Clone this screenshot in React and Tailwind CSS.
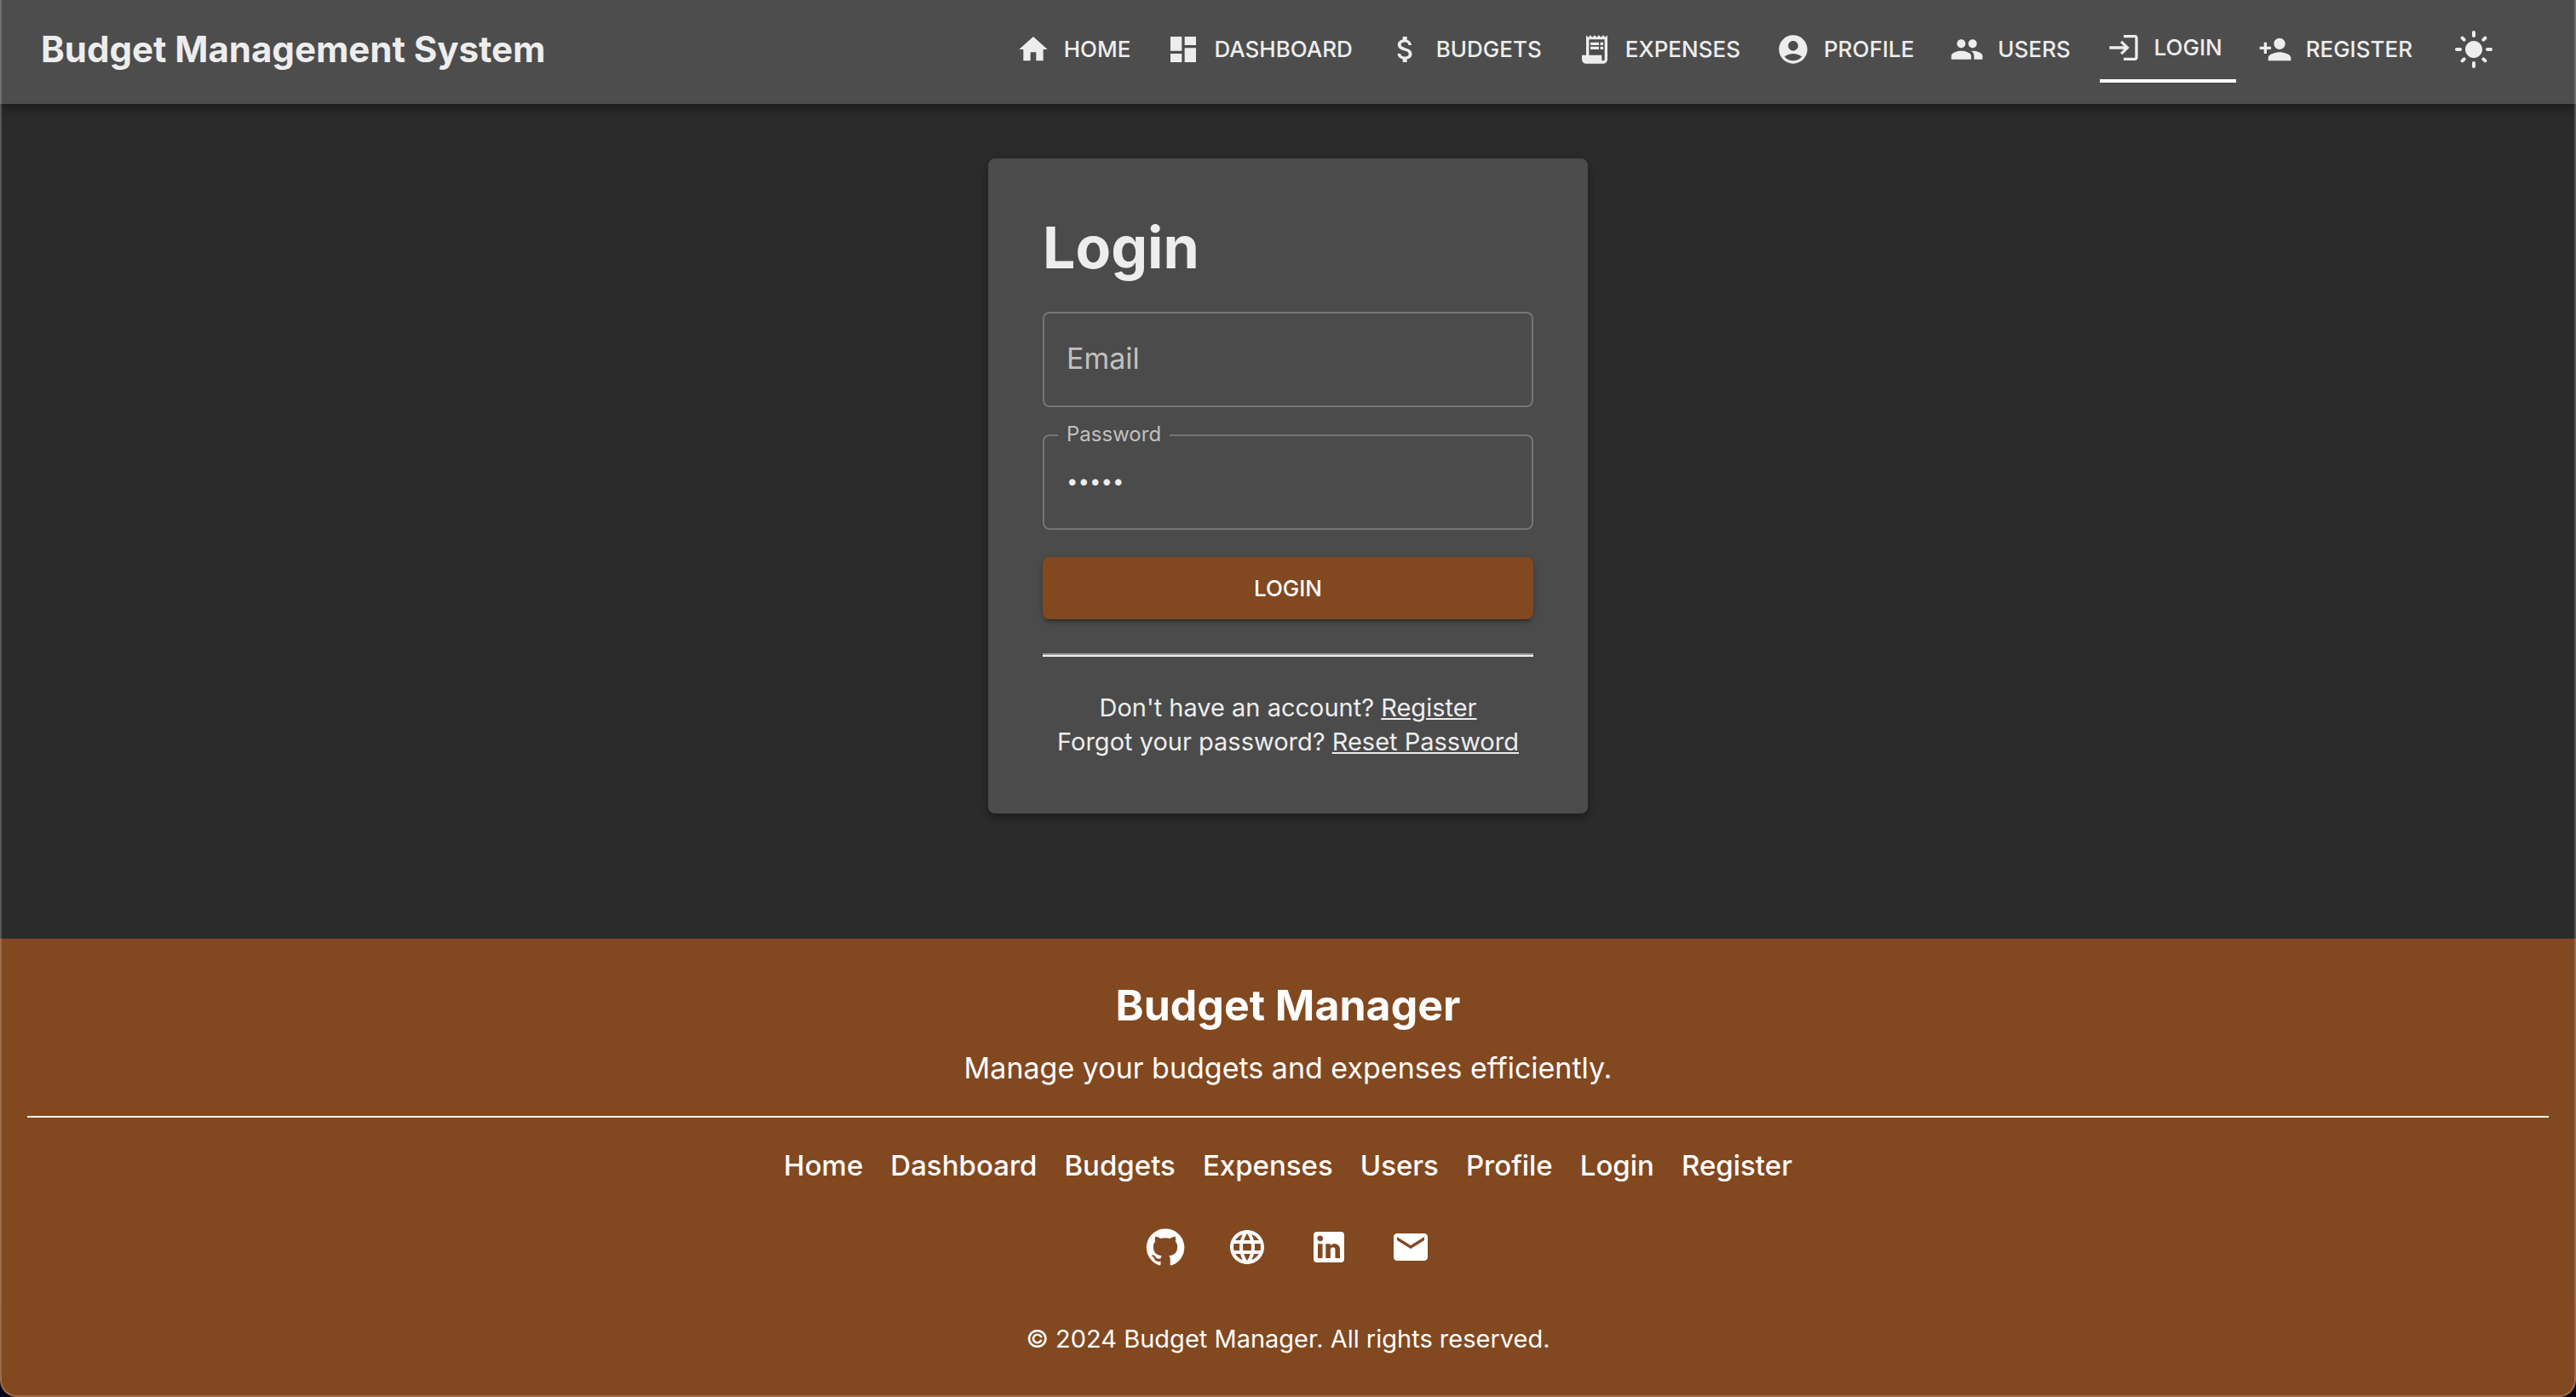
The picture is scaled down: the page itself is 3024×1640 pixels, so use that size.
import { useState } from "react";
import {
  MdAccountCircle,
  MdAttachMoney,
  MdDashboard,
  MdEmail,
  MdHome,
  MdLanguage,
  MdLightMode,
  MdLogin,
  MdPeople,
  MdPersonAdd,
  MdReceiptLong,
} from "react-icons/md";

const navItems = [
  { label: "Home", icon: MdHome },
  { label: "Dashboard", icon: MdDashboard },
  { label: "Budgets", icon: MdAttachMoney },
  { label: "Expenses", icon: MdReceiptLong },
  { label: "Profile", icon: MdAccountCircle },
  { label: "Users", icon: MdPeople },
  { label: "Login", icon: MdLogin, active: true },
  { label: "Register", icon: MdPersonAdd },
];

const footerLinks = ["Home", "Dashboard", "Budgets", "Expenses", "Users", "Profile", "Login", "Register"];

function GitHubIcon({ className }) {
  return (
    <svg viewBox="0 0 24 24" fill="currentColor" className={className} aria-hidden="true">
      <path d="M12 1.27a11 11 0 00-3.48 21.46c.55.09.73-.28.73-.55v-1.84c-3.03.64-3.67-1.46-3.67-1.46-.55-1.29-1.28-1.65-1.28-1.65-.92-.65.1-.65.1-.65 1.1 0 1.73 1.1 1.73 1.1.92 1.65 2.57 1.2 3.21.92a2 2 0 01.64-1.47c-2.47-.27-5.04-1.19-5.04-5.5 0-1.1.46-2.1 1.2-2.84a3.76 3.76 0 010-2.93s.91-.28 3.11 1.1c1.8-.49 3.7-.49 5.5 0 2.1-1.38 3.02-1.1 3.02-1.1a3.76 3.76 0 01.1 2.93c.83.74 1.2 1.74 1.2 2.94 0 4.21-2.57 5.13-5.04 5.4.45.37.82.92.82 2.02v3.03c0 .27.1.64.73.55A11 11 0 0012 1.27" />
    </svg>
  );
}

function LinkedInIcon({ className }) {
  return (
    <svg viewBox="0 0 24 24" fill="currentColor" className={className} aria-hidden="true">
      <path d="M19 3a2 2 0 0 1 2 2v14a2 2 0 0 1-2 2H5a2 2 0 0 1-2-2V5a2 2 0 0 1 2-2h14m-.5 15.5v-5.3a3.26 3.26 0 0 0-3.26-3.26c-.85 0-1.84.52-2.32 1.3v-1.11h-2.79v8.37h2.79v-4.93c0-.77.62-1.4 1.39-1.4a1.4 1.4 0 0 1 1.4 1.4v4.93h2.79M6.88 8.56a1.68 1.68 0 0 0 1.68-1.68c0-.93-.75-1.69-1.68-1.69a1.69 1.69 0 0 0-1.69 1.69c0 .93.76 1.68 1.69 1.68m1.39 9.94v-8.37H5.5v8.37h2.77z" />
    </svg>
  );
}

const socials = [
  { label: "GitHub", icon: GitHubIcon },
  { label: "Website", icon: MdLanguage },
  { label: "LinkedIn", icon: LinkedInIcon },
  { label: "Email", icon: MdEmail },
];

function Header() {
  return (
    <header className="relative z-10 flex items-center justify-between bg-[#4d4d4d] pt-[18px] pr-20 pb-6 pl-12 shadow-[0_4px_8px_-2px_rgba(0,0,0,0.2),0_8px_10px_rgba(0,0,0,0.14),0_2px_20px_rgba(0,0,0,0.12)]">
      <h1 className="text-[42px] leading-[60px] font-bold whitespace-nowrap">Budget Management System</h1>
      <div className="flex items-center gap-4">
        <nav className="flex items-center gap-[18px]">
          {navItems.map(({ label, icon: Icon, active }) => (
            <a
              key={label}
              href={"#" + label.toLowerCase()}
              aria-current={active ? "page" : undefined}
              className={
                "flex items-center gap-4 py-3 pr-4 pl-2 text-[26px] leading-[50px] font-medium uppercase " +
                (active ? "border-b-4 border-white" : "")
              }
            >
              <Icon className="size-10" aria-hidden="true" />
              {label}
            </a>
          ))}
        </nav>
        <button type="button" aria-label="Toggle theme" className="rounded-full p-4">
          <MdLightMode className="size-12" aria-hidden="true" />
        </button>
      </div>
    </header>
  );
}

function LoginForm() {
  const [email, setEmail] = useState("");
  const [password, setPassword] = useState("12345");

  return (
    <section className="w-full max-w-[704px] rounded-lg bg-[#4b4b4b] p-16 shadow-[0_4px_8px_-2px_rgba(0,0,0,0.2),0_4px_8px_rgba(0,0,0,0.14),0_2px_16px_rgba(0,0,0,0.12)]">
      <h2 className="mb-9 text-[68px] leading-[80px] font-bold">Login</h2>
      <form className="flex flex-col" onSubmit={(event) => event.preventDefault()}>
        <input
          type="email"
          aria-label="Email"
          placeholder="Email"
          value={email}
          onChange={(event) => setEmail(event.target.value)}
          className="h-28 w-full rounded-lg border-2 border-[#757575] bg-transparent px-[26px] pb-1 text-[34px] outline-none placeholder:text-[#c0c0c0]"
        />
        <div className="relative mt-8">
          <input
            id="password"
            type="password"
            value={password}
            onChange={(event) => setPassword(event.target.value)}
            className="h-28 w-full rounded-lg border-2 border-[#757575] bg-transparent px-[26px] pb-1 text-2xl outline-none"
          />
          <label
            htmlFor="password"
            className="absolute -top-4 left-[18px] bg-[#4b4b4b] px-[10px] text-2xl leading-8 text-[#c0c0c0]"
          >
            Password
          </label>
        </div>
        <button
          type="submit"
          className="mt-8 rounded-lg bg-[#824820] py-3 text-[26px] leading-[49px] font-medium text-white uppercase shadow-[0_6px_2px_-4px_rgba(0,0,0,0.2),0_4px_4px_rgba(0,0,0,0.14),0_2px_10px_rgba(0,0,0,0.12)]"
        >
          Login
        </button>
      </form>
      <hr className="my-10 h-1 border-t-2 border-b-2 border-t-[#9f9f9f] border-b-[#ededed]" />
      <div className="text-center text-[29px] leading-10">
        <p>
          Don't have an account?{" "}
          <a href="#register" className="underline">
            Register
          </a>
        </p>
        <p>
          Forgot your password?{" "}
          <a href="#reset" className="underline">
            Reset Password
          </a>
        </p>
      </div>
    </section>
  );
}

function Footer() {
  return (
    <footer className="bg-[#824820] px-8 py-12 text-center text-white">
      <h2 className="text-[50px] leading-[60px] font-bold">Budget Manager</h2>
      <p className="mt-5 text-[34px] leading-[48px]">Manage your budgets and expenses efficiently.</p>
      <hr className="mt-8 border-t-2 border-white" />
      <nav className="mt-8 flex flex-wrap justify-center gap-8 text-[33px] leading-[48px] font-medium">
        {footerLinks.map((label) => (
          <a key={label} href={"#" + label.toLowerCase()}>
            {label}
          </a>
        ))}
      </nav>
      <div className="mt-8 flex justify-center gap-4">
        {socials.map(({ label, icon: Icon }) => (
          <a key={label} href={"#" + label.toLowerCase()} aria-label={label} className="p-4">
            <Icon className="size-12" />
          </a>
        ))}
      </div>
      <p className="mt-12 text-[29px] leading-10">© 2024 Budget Manager. All rights reserved.</p>
    </footer>
  );
}

export default function App() {
  return (
    <div className="min-h-screen bg-[#08041a] font-['Inter',sans-serif] text-[#ededed]">
      <div className="relative flex min-h-screen flex-col overflow-hidden rounded-b-[20px] bg-[#2b2b2b]">
        <Header />
        <main className="flex flex-1 justify-center px-8 pt-16 pb-16">
          <div className="flex w-full flex-col items-center">
            <LoginForm />
          </div>
        </main>
        <Footer />
        <div className="pointer-events-none absolute inset-0 z-20 rounded-b-[20px] border-x-2 border-b-2 border-white/20" />
      </div>
    </div>
  );
}
